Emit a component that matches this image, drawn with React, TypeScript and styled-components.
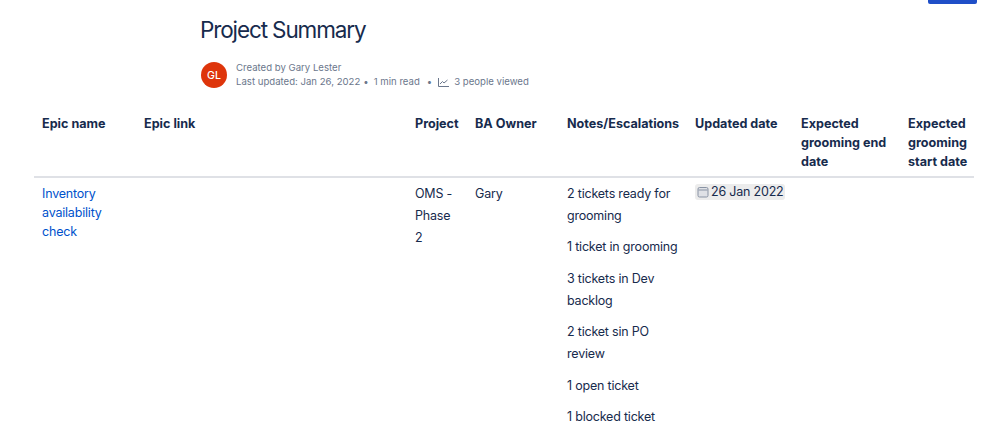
import React from "react";
import styled, { createGlobalStyle } from "styled-components";

const Global = createGlobalStyle`
  html, body { margin: 0; padding: 0; background: #fff; }
  body { width: 998px; height: 434px; overflow: hidden; font-family: Inter, "Liberation Sans", sans-serif; color: #172b4d; }
`;
const Page = styled.div`
  position: relative;
  width: 998px;
  height: 434px;
  overflow: hidden;
`;
const TopButton = styled.div`
  position: absolute;
  top: 0;
  left: 928px;
  width: 49px;
  height: 4px;
  background: #1f4fc8;
  border-radius: 0 0 2px 2px;
`;
const Header = styled.header`
  padding: 16px 0 0 200px;
`;
const Title = styled.h1`
  margin: 0;
  font-size: 22.5px;
  line-height: 28px;
  font-weight: 400;
  color: #172b4d;
  letter-spacing: -1.12px;
`;
const Byline = styled.div`
  display: flex;
  align-items: center;
  gap: 9px;
  margin: 17px 0 0 1px;
`;
const Avatar = styled.div`
  width: 26px;
  height: 26px;
  border-radius: 50%;
  background: #de350b;
  color: #fff;
  display: flex;
  align-items: center;
  justify-content: center;
  font-size: 10.5px;
  font-weight: 500;
`;
const Meta = styled.div`
  font-size: 9.6px;
  line-height: 14px;
  color: #6b778c;
`;
const MetaRow = styled.div`
  display: flex;
  align-items: center;
  white-space: nowrap;
`;
const Dot = styled.span<{ $l: number; $r: number }>`
  margin: 0 ${(p) => p.$r}px 0 ${(p) => p.$l}px;
`;
const Table = styled.table`
  border-collapse: collapse;
  table-layout: fixed;
  width: 940px;
  margin: 18px 0 0 34px;
  font-size: 12.5px;
  letter-spacing: -0.2px;
`;
const Th = styled.th`
  text-align: left;
  vertical-align: top;
  font-weight: 700;
  font-size: 12.6px;
  letter-spacing: 0;
  line-height: 19px;
  padding: 7px 0 5px 8px;
  border-bottom: 2px solid #dfe1e6;
  color: #172b4d;
`;
const Td = styled.td<{ $pad?: number }>`
  vertical-align: top;
  padding: 6px ${(p) => p.$pad ?? 0}px 6px 8px;
  line-height: 19px;
  color: #172b4d;
`;
const Link = styled.a`
  color: #0052cc;
  text-decoration: none;
`;
const CellLine = styled.p`
  margin: 0 0 9.5px;
  line-height: 22px;
`;
const Wide = styled.div`
  line-height: 22px;
  margin-top: -1.5px;
`;
const DateChip = styled.span`
  display: inline-flex;
  align-items: center;
  gap: 2px;
  background: #ececec;
  border-radius: 3px;
  padding: 0 1px 0 2px;
  height: 16px;
  white-space: nowrap;
  line-height: 16px;
`;

const widths = [102, 271, 60, 92, 128, 106, 107, 74];

export default function App() {
  return (
    <Page>
      <Global />
      <TopButton />
      <Header>
        <Title>Project Summary</Title>
        <Byline>
          <Avatar>GL</Avatar>
          <Meta>
            <MetaRow>Created by Gary Lester</MetaRow>
            <MetaRow>
              Last updated: Jan 26, 2022<Dot $l={3} $r={5}>•</Dot>1 min read<Dot $l={7} $r={5}>•</Dot>
              <svg width="11" height="9" viewBox="0 0 11 9" fill="none" stroke="#6b778c" strokeWidth="1" style={{ margin: "0 5px 0 1px" }}>
                <path d="M0.5 0v8.5H11" />
                <path d="M2 6l2.5-2.5 1.5 1.5L9.5 2" />
              </svg>
              3 people viewed
            </MetaRow>
          </Meta>
        </Byline>
      </Header>
      <Table>
        <colgroup>
          {widths.map((w, i) => (
            <col key={i} style={{ width: w }} />
          ))}
        </colgroup>
        <thead>
          <tr>
            <Th>Epic name</Th>
            <Th>Epic link</Th>
            <Th>Project</Th>
            <Th>BA Owner</Th>
            <Th>Notes/Escalations</Th>
            <Th>Updated date</Th>
            <Th>Expected grooming end date</Th>
            <Th>Expected grooming start date</Th>
          </tr>
        </thead>
        <tbody>
          <tr>
            <Td>
              <Link href="#">Inventory availability check</Link>
            </Td>
            <Td />
            <Td $pad={8}>
              <Wide>OMS - Phase 2</Wide>
            </Td>
            <Td>Gary</Td>
            <Td>
              <Wide>
                <CellLine>2 tickets ready for grooming</CellLine>
                <CellLine>1 ticket in grooming</CellLine>
                <CellLine>3 tickets in Dev backlog</CellLine>
                <CellLine>2 ticket sin PO review</CellLine>
                <CellLine>1 open ticket</CellLine>
                <CellLine>1 blocked ticket</CellLine>
              </Wide>
            </Td>
            <Td>
              <DateChip>
                <svg width="12" height="12" viewBox="0 0 12 12" fill="none">
                  <rect x="1" y="1.5" width="10" height="9.5" rx="1.5" fill="#dfe1e6" stroke="#8993a4" />
                  <path d="M1.5 4h9" stroke="#8993a4" />
                </svg>
                26 Jan 2022
              </DateChip>
            </Td>
            <Td />
            <Td />
          </tr>
        </tbody>
      </Table>
    </Page>
  );
}
